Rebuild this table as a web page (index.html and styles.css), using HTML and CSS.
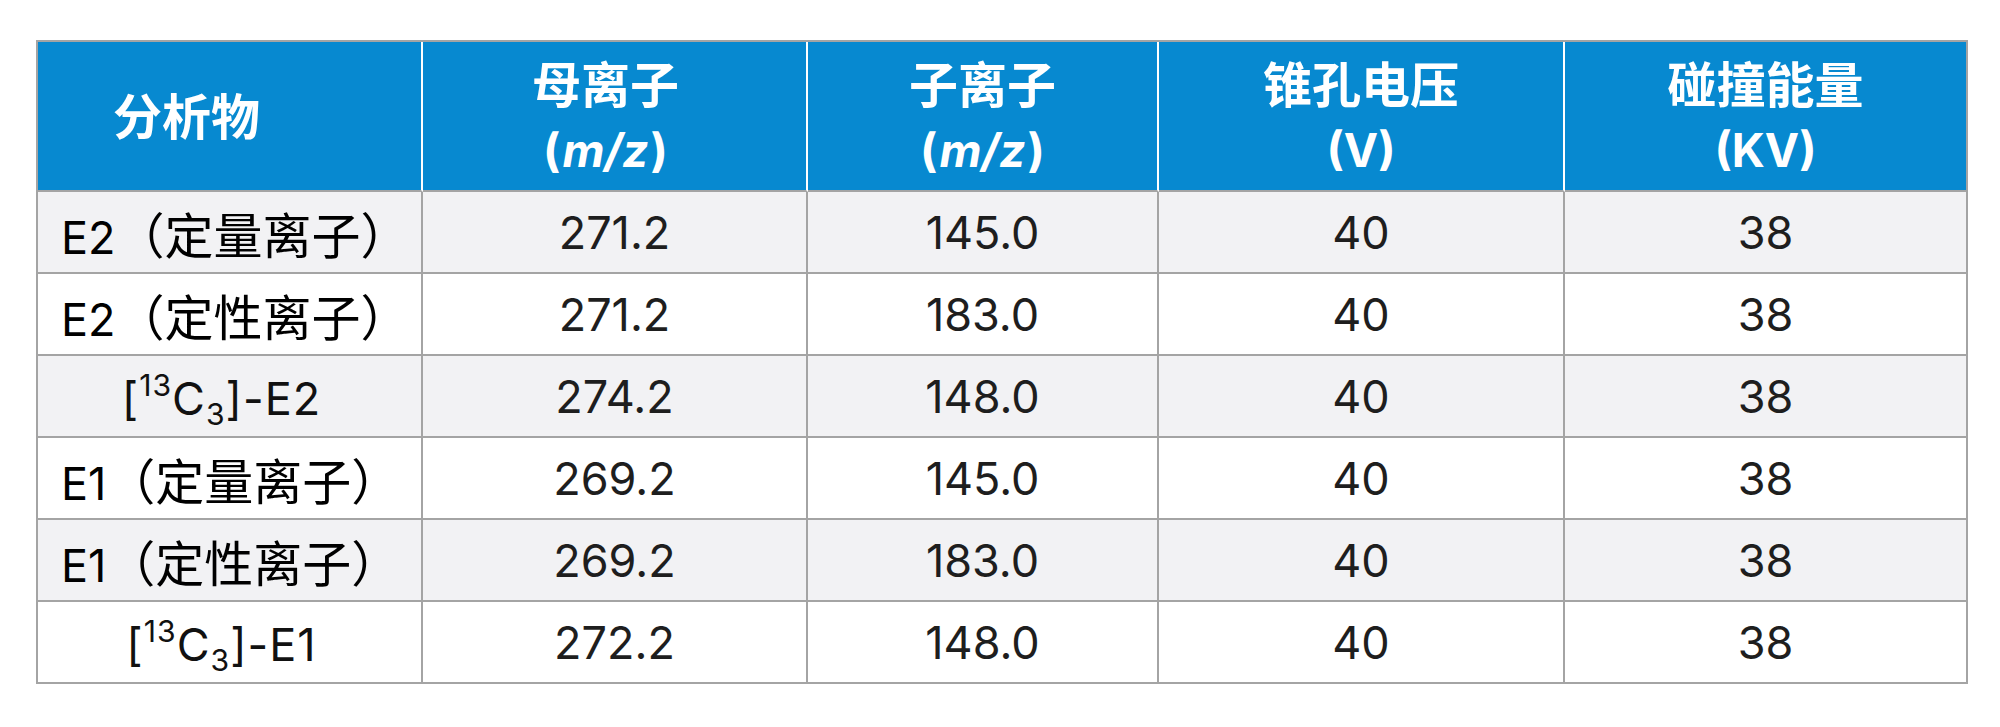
FILE: index.html
```html
<!DOCTYPE html>
<html lang="zh">
<head>
<meta charset="utf-8">
<title>MRM 参数</title>
<link rel="stylesheet" href="styles.css">
</head>
<body>
<div class="wrap">
<table class="data">
  <colgroup>
    <col class="c1"><col class="c2"><col class="c3"><col class="c4"><col class="c5">
  </colgroup>
  <thead>
    <tr>
      <th class="first"><span class="cn">分析物</span></th>
      <th class="shift"><span class="ln cn">母离子</span><span class="ln">(<i>m/z</i>)</span></th>
      <th><span class="ln cn">子离子</span><span class="ln">(<i>m/z</i>)</span></th>
      <th><span class="ln cn">锥孔电压</span><span class="ln">(V)</span></th>
      <th class="last"><span class="ln cn">碰撞能量</span><span class="ln">(KV)</span></th>
    </tr>
  </thead>
  <tbody>
    <tr class="alt"><td class="name">E2<span class="cn">（定量离子）</span></td><td>271.2</td><td>145.0</td><td>40</td><td>38</td></tr>
    <tr><td class="name">E2<span class="cn">（定性离子）</span></td><td>271.2</td><td>183.0</td><td>40</td><td>38</td></tr>
    <tr class="alt"><td class="iso-name">[<sup class="iso">13</sup>C<sub class="iso">3</sub>]-E2</td><td>274.2</td><td>148.0</td><td>40</td><td>38</td></tr>
    <tr><td class="name">E1<span class="cn">（定量离子）</span></td><td>269.2</td><td>145.0</td><td>40</td><td>38</td></tr>
    <tr class="alt"><td class="name">E1<span class="cn">（定性离子）</span></td><td>269.2</td><td>183.0</td><td>40</td><td>38</td></tr>
    <tr><td class="iso-name">[<sup class="iso">13</sup>C<sub class="iso">3</sub>]-E1</td><td>272.2</td><td>148.0</td><td>40</td><td>38</td></tr>
  </tbody>
</table>
</div>
</body>
</html>
```
FILE: styles.css
```css
html, body {
  margin: 0;
  padding: 0;
  background: #ffffff;
}

.wrap {
  padding: 40px 0 0 36px;
}

.data {
  border-collapse: separate;
  border-spacing: 0;
  table-layout: fixed;
  width: 1930px;
  border-top: 2px solid #a4a4a4;
  border-left: 2px solid #a4a4a4;
  font-family: Inter, "Noto Sans CJK SC", sans-serif;
}

.c1 { width: 385px; }
.c2 { width: 385px; }
.c3 { width: 351px; }
.c4 { width: 406px; }
.c5 { width: 403px; }

.data th {
  background: #0789d0;
  color: #ffffff;
  font-family: Inter, "Noto Sans CJK SC", sans-serif;
  font-weight: 700;
  font-size: 46px;
  line-height: 68px;
  height: 134px;
  padding: 6px 0;
  text-align: center;
  vertical-align: middle;
  border-right: 2px solid #ffffff;
  border-bottom: 2px solid #a4a4a4;
}

.data th .cn {
  font-family: "Noto Sans CJK SC", sans-serif;
  font-size: 49px;
}

.data th.first {
  text-align: left;
  padding-left: 75px;
}

.data th.shift {
  padding-right: 18px;
}

.data th.last {
  border-right-color: #a4a4a4;
}

.data th .ln {
  display: block;
}

.data th i {
  font-style: italic;
  padding: 0 2px;
}

.data td {
  height: 80px;
  padding: 0;
  font-size: 45px;
  line-height: 1;
  color: #1e1e1e;
  text-align: center;
  vertical-align: middle;
  background: #ffffff;
  border-right: 2px solid #a4a4a4;
  border-bottom: 2px solid #a4a4a4;
}

.data tr.alt td {
  background: #f2f2f4;
}

.data td.name {
  color: #000000;
  text-align: left;
  padding: 4px 0 0 23px;
  height: 76px;
  white-space: nowrap;
}

.data td.name .cn {
  font-family: "Noto Sans CJK SC", sans-serif;
  font-size: 49px;
}

.data td.iso-name {
  color: #111111;
  letter-spacing: 1px;
  padding: 4px 16px 0 0;
  height: 76px;
}

.iso {
  font-size: 0.67em;
  line-height: 0;
}

sup.iso {
  vertical-align: 0.62em;
}

sub.iso {
  vertical-align: -0.33em;
}
```
